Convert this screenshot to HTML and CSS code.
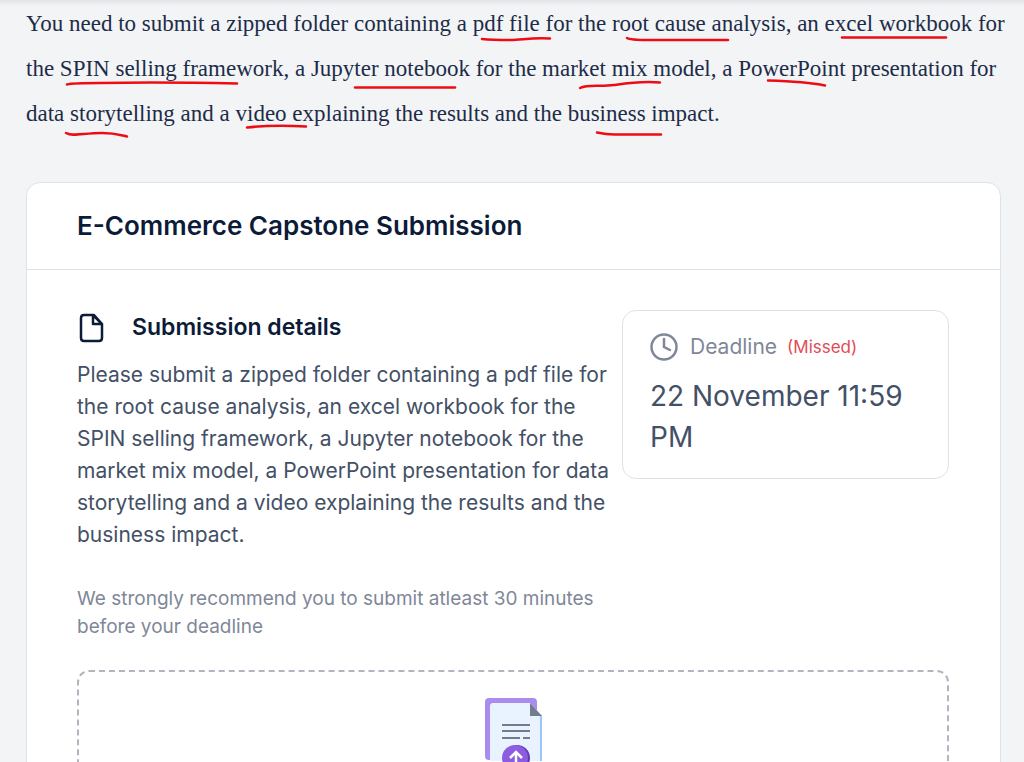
FILE: index.html
```html
<!DOCTYPE html>
<html lang="en">
<head>
<meta charset="utf-8">
<meta name="viewport" content="width=device-width, initial-scale=1">
<title>E-Commerce Capstone Submission</title>
<link rel="stylesheet" href="styles.css">
</head>
<body>
<main class="page">
  <section class="intro">
    <p class="intro-text">You need to submit a zipped folder containing a pdf file for the root cause analysis, an excel workbook for<br>the SPIN selling framework, a Jupyter notebook for the market mix model, a PowerPoint presentation for<br>data storytelling and a video explaining the results and the business impact.</p>
    <svg class="marks" aria-hidden="true">
      <path d="M482 39C492 40 501 40 511 40S534 37 550 38.500"/>
      <path d="M627 38Q630 40 648 40H728"/>
      <path d="M842 37.500H946"/>
      <path d="M67 84.500Q72 83 100 83Q160 82 237 83.500"/>
      <path d="M355 87.500H455"/>
      <path d="M580 88C588 84 600 87 614 85S640 81 660 82.500"/>
      <path d="M768 80.500C785 81 808 82 825 85.500"/>
      <path d="M66 133C73 137 83 133 102 133C116 133 120 135 127 136.500"/>
      <path d="M247 127.500C260 126 282 125 306 126.500"/>
      <path d="M597 132.500Q606 134.500 615 134.500H661"/>
    </svg>
  </section>
  <article class="card">
    <header class="card-header"><h1 class="title">E-Commerce Capstone Submission</h1></header>
    <div class="card-body">
      <div class="overview">
        <section class="details">
          <h2 class="subtitle">
            <svg class="file-icon" viewBox="0 0 28 30" aria-hidden="true"><path d="M7 2H17L25 11V25Q25 28 22 28H7Q4 28 4 25V5Q4 2 7 2M16 2V11H25L16 2"/></svg>
            Submission details
          </h2>
          <p class="description">Please submit a zipped folder containing a pdf file for<br>the root cause analysis, an excel workbook for the<br>SPIN selling framework, a Jupyter notebook for the<br>market mix model, a PowerPoint presentation for data<br>storytelling and a video explaining the results and the<br>business impact.</p>
          <p class="note">We strongly recommend you to submit atleast 30 minutes<br>before your deadline</p>
        </section>
        <aside class="deadline">
          <div class="deadline-head">
            <svg class="clock-icon" viewBox="0 0 28 28" aria-hidden="true"><circle cx="14" cy="14" r="12.500"/><path d="M14 6V14L20 17"/></svg>
            <span class="deadline-label">Deadline</span>
            <span class="missed">(Missed)</span>
          </div>
          <p class="deadline-date">22 November 11:59<br>PM</p>
        </aside>
      </div>
      <div class="dropzone">
        <svg class="upload-icon" viewBox="0 0 60 76" aria-hidden="true">
          <rect x="2" width="52" height="62" rx="4" fill="#aa8cee"/>
          <path d="M10 5H47L59 18V63H7V8Q7 5 10 5Z" fill="#e9f2ff"/>
          <path d="M57 17H59V63H57Z" fill="#9dc5fb"/>
          <path d="M47 5L59 18H47Z" fill="#747b8d"/>
          <path d="M19 27H47M19 33H47M19 40H37M40 40H47" fill="none" stroke="#747b8d" stroke-width="2"/>
          <circle cx="34" cy="60" r="13" fill="#6637bd"/>
          <circle cx="32" cy="60" r="13" fill="#8d5ce0"/>
          <path d="M33 71V55M27 60L33 54L39 60" fill="none" stroke="#fff" stroke-width="2.500"/>
        </svg>
      </div>
    </div>
  </article>
</main>
</body>
</html>
```
FILE: styles.css
```css
* { box-sizing: border-box; }
body {
  margin: 0;
  height: 100vh;
  overflow: hidden;
  background: linear-gradient(#e1e3e7, #f3f4f6 6px);
  color: #0b1b38;
  font-family: Inter, "Liberation Sans", sans-serif;
}
h1, h2, p { margin: 0; }
.page { padding: 0 23px 0 26px; }
.intro-text {
  padding-top: 1px;
  font-family: "Liberation Serif", serif;
  font-size: 23px;
  line-height: 45px;
  color: #1d2c48;
  white-space: nowrap;
}
.marks {
  position: absolute;
  top: 0;
  left: 0;
  width: 100%;
  height: 150px;
  fill: none;
  stroke: #ee0c14;
  stroke-width: 2.5;
  stroke-linecap: round;
  pointer-events: none;
}
.card {
  margin-top: 46px;
  background: #fff;
  border: 1px solid #dfe2e6;
  border-radius: 14px 14px 0 0;
}
.card-header { padding: 24px 50px 25px; border-bottom: 1px solid #dfe2e6; }
.title { font-size: 26px; line-height: 37px; font-weight: 600; }
.card-body { padding: 40px 51px 0 50px; }
.overview { display: flex; align-items: flex-start; justify-content: space-between; }
.details { flex: 1; min-width: 0; white-space: nowrap; }
.subtitle {
  display: flex;
  align-items: center;
  gap: 27px;
  font-size: 23px;
  line-height: 35px;
  font-weight: 600;
}
.file-icon {
  width: 28px;
  height: 30px;
  fill: none;
  stroke: currentColor;
  stroke-width: 2.5;
  stroke-linejoin: round;
}
.description { margin-top: 14px; font-size: 21px; line-height: 32px; color: #435066; }
.note { margin-top: 34px; font-size: 19px; line-height: 28px; color: #7f8798; }
.deadline {
  flex: 0 0 327px;
  padding: 22px 27px 20px;
  border: 1px solid #dfe2e6;
  border-radius: 14px;
}
.deadline-head { display: flex; align-items: center; line-height: 28px; }
.clock-icon {
  width: 28px;
  height: 28px;
  margin-right: 12px;
  fill: none;
  stroke: #7f8798;
  stroke-width: 2.5;
  stroke-linecap: round;
}
.deadline-label { margin-right: 10px; font-size: 21px; color: #7f8798; }
.missed { font-size: 17px; color: #e14c57; }
.deadline-date { margin-top: 15px; font-size: 28px; line-height: 41px; color: #435066; white-space: nowrap; }
.dropzone {
  display: flex;
  justify-content: center;
  margin-top: 29px;
  min-height: 240px;
  padding-top: 26px;
  border: 2px dashed #b3b4c0;
  border-radius: 12px;
}
.upload-icon { width: 60px; height: 76px; }
```
